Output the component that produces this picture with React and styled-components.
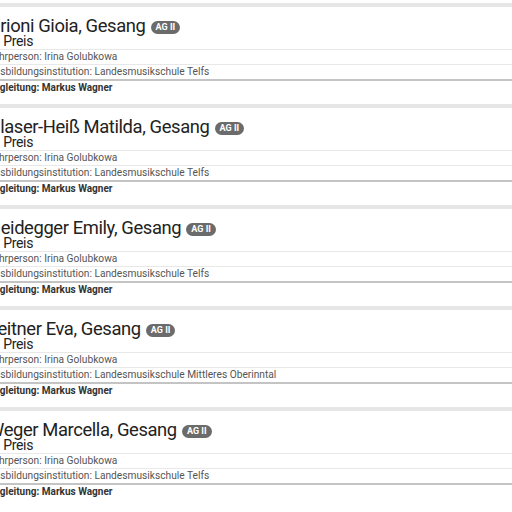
import React from 'react';
import styled, { createGlobalStyle } from 'styled-components';

const entries = [
	{ name: 'Orioni Gioia', inst: 'Landesmusikschule Telfs' },
	{ name: 'Glaser-Heiß Matilda', inst: 'Landesmusikschule Telfs' },
	{ name: 'Heidegger Emily', inst: 'Landesmusikschule Telfs' },
	{ name: 'Leitner Eva', inst: 'Landesmusikschule Mittleres Oberinntal' },
	{ name: 'Weger Marcella', inst: 'Landesmusikschule Telfs' },
];

export default function App() {
	return (
		<>
			<GlobalStyle />
			<List>
				{entries.map(e => (
					<Card key={e.name}>
						<Header>
							<Title>
								{e.name}, Gesang <Badge>AG II</Badge>
							</Title>
							<Prize>1. Preis</Prize>
						</Header>
						<Row>Lehrperson: Irina Golubkowa</Row>
						<Row $last>Ausbildungsinstitution: {e.inst}</Row>
						<Footer>Begleitung: Markus Wagner</Footer>
					</Card>
				))}
			</List>
		</>
	);
}

const GlobalStyle = createGlobalStyle`
	html, body {
		margin: 0;
		padding: 0;
		background: #fff;
		overflow: hidden;
		font-family: Roboto, "Liberation Sans", sans-serif;
		color: #333;
	}
`;

const List = styled.div`
	display: flex;
	flex-direction: column;
	gap: 4px;
	margin: 3px 0 0 -12px;
	width: calc(100% + 40px);
	padding-top: 4px;
	background: #e6e6e6;
`;

const Card = styled.div`
	background: #fff;
	height: 97px;
	box-sizing: border-box;
`;

const Header = styled.div`
	padding: 10px 0 1px;
	border-bottom: 1px solid #e8e8e8;
`;

const Title = styled.div`
	font-size: 18.4px;
	letter-spacing: -0.4px;
	line-height: 18px;
	color: #222;
`;

const Badge = styled.span`
	display: inline-block;
	vertical-align: 2px;
	height: 13px;
	line-height: 13px;
	padding: 0 5px;
	margin-left: 1px;
	letter-spacing: 0;
	border-radius: 7px;
	background: #6b6b6b;
	color: #fff;
	font-size: 9px;
	font-weight: 700;
`;

const Prize = styled.div`
	font-size: 14px;
	letter-spacing: -0.3px;
	line-height: 13px;
	padding-left: 1px;
	color: #222;
`;

const Row = styled.div`
	font-size: 10.2px;
	line-height: 14px;
	color: #555;
	border-bottom: ${p => (p.$last ? 'none' : '1px solid #e8e8e8')};
`;

const Footer = styled.div`
	font-size: 10px;
	line-height: 14px;
	font-weight: 700;
	color: #333;
	border-top: 2px solid #c4c4c4;
`;
